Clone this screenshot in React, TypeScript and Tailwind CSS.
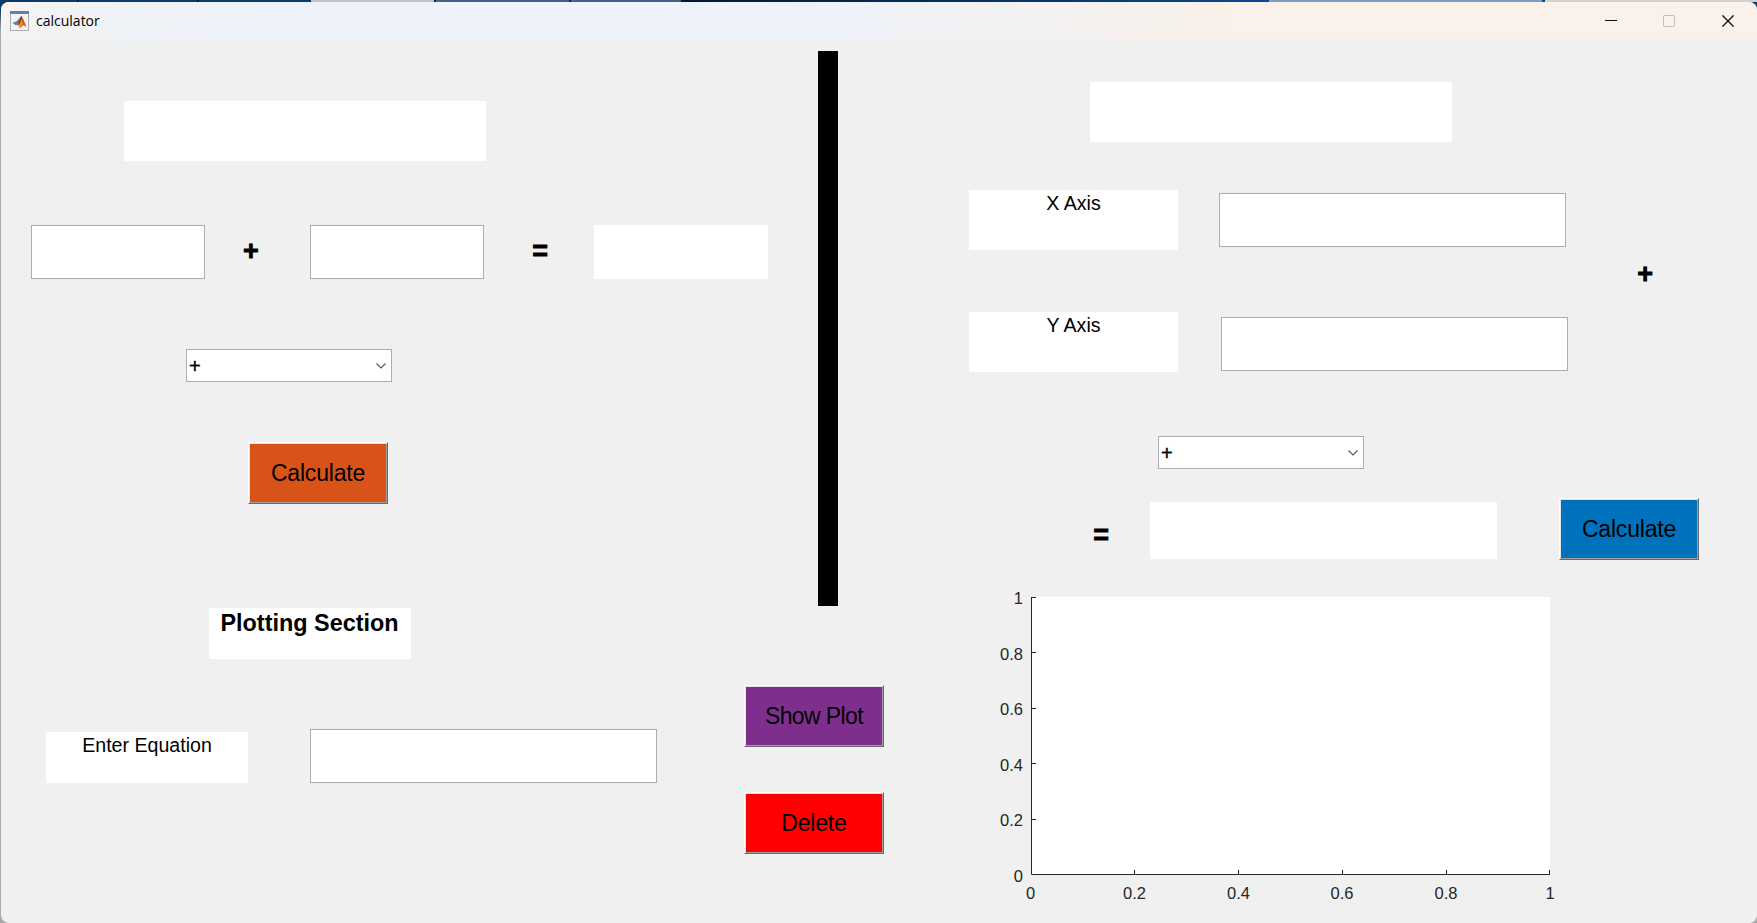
import React from "react";

const SEG = [
  "w-[77px] bg-[#0b3a68]", "w-[2px] bg-[#0a2238]", "w-[118px] bg-[#0b3a68]", "w-[2px] bg-[#0a2238]",
  "w-[112px] bg-[#0b3a68]", "w-[123px] bg-[#bfc3c6]", "w-[2px] bg-[#0b2a4a]", "w-[133px] bg-[#41648c]",
  "w-[2px] bg-[#0b2a4a]", "w-[110px] bg-[#41648c]",
  "w-[588px] bg-[linear-gradient(90deg,#04182c,#0a4a90)]", "w-[273px] bg-[#7d9cc0]", "w-[3px] bg-[#0a4a90]", "grow bg-[#d0d0d0]",
];

function Box({ className = "", children }: { className?: string; children?: React.ReactNode }) {
  return <div className={"shrink-0 bg-white text-center text-[19.6px] leading-[26px] " + className}>{children}</div>;
}

function Field({ className = "" }: { className?: string }) {
  return <input className={"block h-[54px] shrink-0 border border-[#abadb3] bg-white px-2 text-[20px] outline-none " + className} />;
}

function Btn({ label, className }: { label: string; className: string }) {
  return (
    <button className="block h-[62px] w-[140px] shrink-0 border border-t-white border-l-white border-r-[#696969] border-b-[#696969]">
      <span className={"flex h-[60px] w-[138px] items-center justify-center border border-t-[#e3e3e3] border-l-[#e3e3e3] border-r-[#a0a0a0] border-b-[#a0a0a0] text-[23px] leading-none " + className}>
        {label}
      </span>
    </button>
  );
}

function Operator({ sign }: { sign: string }) {
  return <span className="block h-7 w-[16.4px] shrink-0 text-center text-[27px] leading-7 font-bold [-webkit-text-stroke:0.8px_black]">{sign}</span>;
}

function Select({ className = "" }: { className?: string }) {
  return (
    <div className={"flex h-[33px] w-[206px] shrink-0 items-center justify-between border border-[#abadb3] bg-white pr-[5px] pl-[2px] " + className}>
      <span className="text-[20px] leading-none [-webkit-text-stroke:0.4px_black]">+</span>
      <svg width="10" height="6" viewBox="0 0 10 6" fill="none" stroke="#555" strokeWidth="1.1"><path d="M.5.5 5 5 9.5.5" /></svg>
    </div>
  );
}

export default function App() {
  return (
    <div className="flex h-[923px] w-[1757px] flex-col overflow-hidden bg-[#a9a9a9] font-['Liberation_Sans',Arial,sans-serif] text-black">
      <div className="h-[923px] bg-[linear-gradient(#0b3a68_0px,#0b3a68_10px,#a9a9a9_30px)]">
        <div className="flex h-[2px]">{SEG.map((c, i) => <div key={i} className={"shrink-0 " + c} />)}</div>
        <div className="ml-px h-[921px] overflow-hidden rounded-[8px] bg-[#f0f0f0]">
          <header className="flex h-[37px] items-center bg-[linear-gradient(90deg,#f7f3f2_0px,#eff3f6_110px,#edf2fb_300px,#edf2fb_780px,#f3f2f3_1000px,#f9f1ea_1230px)] pl-[9px]">
            <svg width="19" height="20" viewBox="0 0 19 20" className="shrink-0">
              <rect x=".5" y=".5" width="18" height="19" fill="#f4f4f4" stroke="#a9adb2" />
              <path d="M0 0h19v3H0z" fill="#5c84ad" />
              <path d="m2.5 12 4.5-2 4-5-1 7-4 2.5z" fill="#3c8fc4" />
              <path d="m6 14 4-4 1.5-5.5 2 4 3 7.5-3-2-3.500 3-2-3z" fill="#d9541e" />
              <path d="m11.300 4.500.5 5-2 5-1.500-3 1.500-2z" fill="#8e2a16" />
              <path d="m12 8 .5 5-3 4-1-2z" fill="#f49a2c" />
            </svg>
            <span className="ml-[7px] w-[68px] font-['Open_Sans','Noto_Sans',sans-serif] text-[14px] leading-5">calculator</span>
            <div className="mr-[23px] ml-auto flex items-center">
              <svg width="12" height="12" viewBox="0 0 12 12" className="mr-[46px]" shapeRendering="crispEdges"><path d="M0 5.500h12" stroke="#111" /></svg>
              <svg width="12" height="12" viewBox="0 0 12 12" className="mr-[47px]"><rect x=".5" y=".5" width="11" height="11" rx="1" fill="none" stroke="#c3bdb8" /></svg>
              <svg width="12" height="12" viewBox="0 0 12 12"><path d="m.4.4 11.200 11.200M11.600.4.4 11.600" stroke="#111" strokeWidth="1.3" /></svg>
            </div>
          </header>

          <main className="flex h-[884px]">
            <section className="w-[883px] shrink-0">
              <div className="flex h-[567px]">
                <div className="w-[817px] shrink-0 pt-[62px]">
                  <Box className="ml-[123px] h-[60px] w-[362px]" />
                  <div className="mt-[64px] ml-[30px] flex items-center">
                    <Field className="w-[174px]" />
                    <div className="flex w-[105px] justify-center pr-[13px] pb-[2px]"><Operator sign="+" /></div>
                    <Field className="w-[174px]" />
                    <div className="flex w-[110px] pb-[2px] pl-[48px]"><Operator sign="=" /></div>
                    <Box className="h-[54px] w-[174px]" />
                  </div>
                  <Select className="mt-[70px] ml-[185px]" />
                  <div className="mt-[60px] ml-[247px]"><Btn label="Calculate" className="bg-[#d95319] tracking-[-0.2px]" /></div>
                </div>
                <div className="mt-3 w-5 bg-black" />
              </div>
              <div className="flex">
                <div className="w-[743px] shrink-0 pt-[2px]">
                  <Box className="ml-[208px] h-[51px] w-[202px]"><b className="block pt-[2px] pr-px text-[23.4px] leading-[26px]">Plotting Section</b></Box>
                  <div className="mt-[70px] ml-[45px] flex items-end gap-[62px]">
                    <Box className="h-[51px] w-[202px]">Enter Equation</Box>
                    <Field className="w-[347px]" />
                  </div>
                </div>
                <div className="flex flex-col gap-[45px] pt-[79px]">
                  <Btn label="Show Plot" className="bg-[#7e2f8e] tracking-[-0.6px]" />
                  <Btn label="Delete" className="bg-[#ff0000] tracking-[-0.2px]" />
                </div>
              </div>
            </section>

            <section className="w-[872px] shrink-0 pt-[43px]">
              <Box className="ml-[206px] h-[60px] w-[362px]" />
              <div className="mt-12 ml-[85px] flex h-[182px]">
                <div className="flex flex-col gap-[62px]">
                  <Box className="h-[60px] w-[209px]">X Axis</Box>
                  <Box className="h-[60px] w-[209px]">Y Axis</Box>
                </div>
                <div className="ml-[41px] flex flex-col gap-[70px] pt-[3px]">
                  <Field className="w-[347px]" />
                  <Field className="ml-[2px] w-[347px]" />
                </div>
                <div className="ml-[69px] pt-[70px]"><Operator sign="+" /></div>
              </div>
              <Select className="mt-[64px] ml-[274px]" />
              <div className="mt-[29px] ml-[209px] flex">
                <div className="w-[57px] pt-[23px]"><Operator sign="=" /></div>
                <Box className="mt-1 h-[57px] w-[347px]" />
                <div className="ml-[62px]"><Btn label="Calculate" className="bg-[#0072bd] tracking-[-0.2px]" /></div>
              </div>
              <svg width="600" height="330" viewBox="980 580 600 330" className="mt-5 ml-24 block" fontSize="16.5" fill="#262626">
                <rect x="1031" y="597" width="519" height="278" fill="#fff" />
                <path
                  d="M1031.5 597V874.5H1550M1031 597.5h5M1031 652.5h5M1031 708.5h5M1031 763.5h5M1031 819.5h5M1134.5 874v-4M1238.5 874v-4M1342.5 874v-4M1446.5 874v-4M1549.5 874v-4"
                  fill="none" stroke="#262626"
                />
                <g textAnchor="end">
                  <text x="1023" y="604">1</text><text x="1023" y="660">0.8</text><text x="1023" y="715">0.6</text>
                  <text x="1023" y="771">0.4</text><text x="1023" y="826">0.2</text><text x="1023" y="882">0</text>
                </g>
                <g textAnchor="middle">
                  <text x="1030.5" y="899">0</text><text x="1134.5" y="899">0.2</text><text x="1238.5" y="899">0.4</text>
                  <text x="1342" y="899">0.6</text><text x="1446" y="899">0.8</text><text x="1550" y="899">1</text>
                </g>
              </svg>
            </section>
          </main>
        </div>
      </div>
    </div>
  );
}
